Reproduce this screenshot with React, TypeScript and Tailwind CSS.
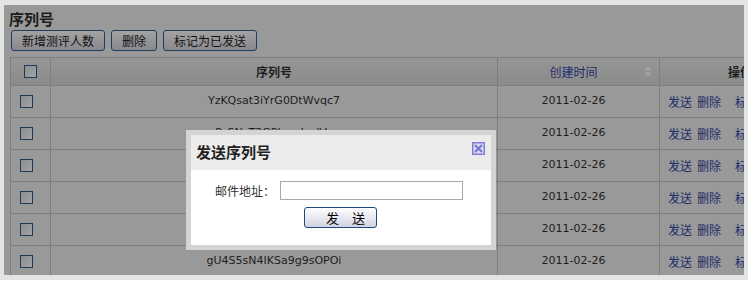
import React from 'react';

const rows = [
  'YzKQsat3iYrG0DtWvqc7',
  'PzSNsT3GPhwqLsdVc',
  'kT8sWq2LmN0aXcV7pRd',
  'Hq3LmZp9sXcT1nVw0Ka',
  'Rw7DkP2sLqN8tYxVb4E',
  'gU4S5sN4IKSa9g9sOPOi',
];

const latin = "font-['DejaVu_Sans','Noto_Sans_CJK_SC',sans-serif]";
const cjk = "font-['Noto_Sans_CJK_SC','DejaVu_Sans',sans-serif]";

const Check = ({ className = '' }: { className?: string }) => (
  <span
    className={`block w-[13px] h-[13px] border border-[#1b3a5c] bg-gradient-to-br from-[#8e8e8e] to-[#a2a2a2] ${className}`}
  />
);

const TopButton = ({ label }: { label: string }) => (
  <button className="h-[21px] px-[10px] border border-[#1f3d5e] rounded-[3px] bg-gradient-to-b from-[#a3a3a3] to-[#88888e] text-[12px] leading-[19px] text-[#111]">
    {label}
  </button>
);

const SortIcon = () => (
  <svg width="8" height="11" viewBox="0 0 8 11" className="absolute right-[7px] top-[8px]">
    <path d="M4 0 L8 4.5 L0 4.5 Z" fill="#a3a3a3" />
    <path d="M0 6.5 L8 6.5 L4 11 Z" fill="#a3a3a3" />
  </svg>
);

export default function App() {
  return (
    <div className={`w-[748px] h-[290px] bg-white overflow-hidden ${cjk}`}>
      <div className="relative h-[280px] border-x-4 border-y-[5px] border-[#e4e4e4] bg-[#999999] overflow-hidden">
        <div className="pl-[5px] pt-[4px] text-[15px] leading-[20px] font-bold text-[#1c1c1c]">序列号</div>

        <div className="flex gap-[6px] pl-[7px] mt-[1px]">
          <TopButton label="新增测评人数" />
          <TopButton label="删除" />
          <TopButton label="标记为已发送" />
        </div>

        {/* grid */}
        <div className="ml-[6px] mt-[6px] w-[810px] border-t border-l border-[#7e7e7e] text-[#1e1e1e]">
          <div className="flex h-[28px] border-b border-[#7e7e7e] bg-gradient-to-b from-[#979797] to-[#8a8a8a] text-[12px] font-bold">
            <div className="w-[40px] shrink-0 border-r border-[#7e7e7e] flex items-center justify-center">
              <Check />
            </div>
            <div className="w-[447px] shrink-0 border-r border-[#7e7e7e] flex items-center justify-center">序列号</div>
            <div className="relative w-[162px] shrink-0 border-r border-[#7e7e7e] flex items-center justify-center pr-[10px] font-normal text-[#1f2d6c]">
              创建时间
              <SortIcon />
            </div>
            <div className="w-[160px] shrink-0 flex items-center justify-center">操作</div>
          </div>

          {rows.map((code, i) => (
            <div key={i} className="flex h-[32px] border-b border-[#7e7e7e]">
              <div className="w-[40px] shrink-0 border-r border-[#7e7e7e] flex items-center pl-[9px]">
                <Check />
              </div>
              <div className={`w-[447px] shrink-0 border-r border-[#7e7e7e] flex items-center justify-center text-[11px] ${latin}`}>
                {code}
              </div>
              <div className={`w-[162px] shrink-0 border-r border-[#7e7e7e] flex items-center justify-center pr-[10px] text-[11px] ${latin}`}>
                2011-02-26
              </div>
              <div className="w-[160px] shrink-0 flex items-center pl-[8px] text-[12px] text-[#1c2b6a] whitespace-nowrap">
                <span>发送</span>
                <span className="ml-[5px]">删除</span>
                <span className="ml-[14px]">标记为已发送</span>
              </div>
            </div>
          ))}
        </div>

        {/* dialog */}
        <div className="absolute left-[182px] top-[125px] w-[310px] h-[120px] border-[5px] border-[#d4d4d4] bg-white">
          <div className="relative h-[35px] bg-[#ececec] flex items-center pl-[5px] text-[15px] font-bold text-[#222]">
            发送序列号
            <svg width="13" height="13" viewBox="0 0 13 13" className="absolute right-[6px] top-[7px]">
              <rect x="0.75" y="0.75" width="11.5" height="11.5" fill="#dcdcf0" stroke="#7f7fd6" strokeWidth="1.5" />
              <path d="M3 3 L10 10 M10 3 L3 10" stroke="#7474d0" strokeWidth="2" />
            </svg>
          </div>
          <div className="flex items-center pl-[24px] pt-[11px]">
            <span className="text-[12px] leading-[19px] text-[#333]">邮件地址：</span>
            <input className="ml-[5px] w-[183px] h-[19px] border border-[#a6aaae] bg-white outline-none" />
          </div>
          <button className="ml-[113px] mt-[7px] w-[73px] h-[21px] rounded-[3px] border border-[#1e4a80] bg-gradient-to-b from-white to-[#d2d2e2] text-[13px] leading-[19px] text-black pl-[10px]">
            发　送
          </button>
        </div>
      </div>
    </div>
  );
}
